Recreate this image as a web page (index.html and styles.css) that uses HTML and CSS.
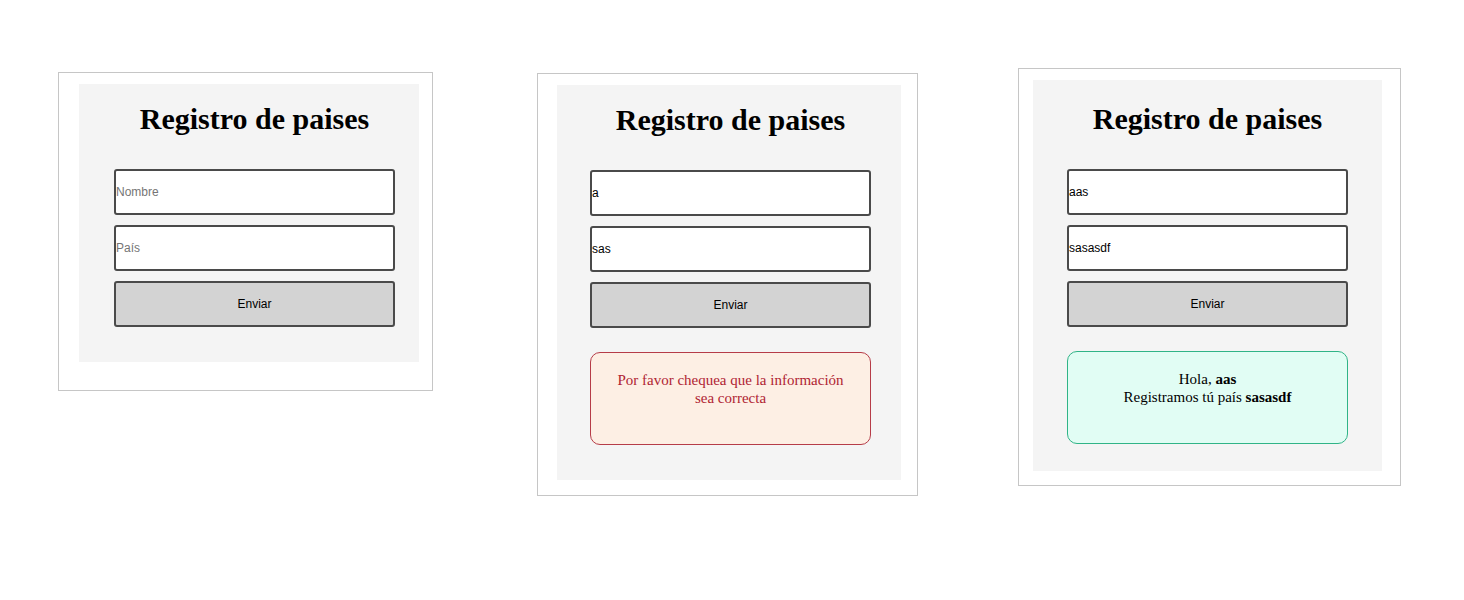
FILE: index.html
```html
<!DOCTYPE html>
<html lang="es">
<head>
<meta charset="utf-8">
<title>Registro de paises</title>
<link rel="stylesheet" href="styles.css">
</head>
<body>
<main class="row">
  <section class="card card-1">
    <div class="panel panel-1">
      <h1 class="title">Registro de paises</h1>
      <form class="form">
        <input class="field" type="text" placeholder="Nombre">
        <input class="field" type="text" placeholder="País">
        <button class="submit" type="button">Enviar</button>
      </form>
    </div>
  </section>

  <section class="card card-2">
    <div class="panel panel-2">
      <h1 class="title">Registro de paises</h1>
      <form class="form">
        <input class="field" type="text" placeholder="Nombre" value="a">
        <input class="field" type="text" placeholder="País" value="sas">
        <button class="submit" type="button">Enviar</button>
      </form>
      <div class="message message-error">Por favor chequea que la información sea correcta</div>
    </div>
  </section>

  <section class="card card-3">
    <div class="panel panel-3">
      <h1 class="title">Registro de paises</h1>
      <form class="form">
        <input class="field" type="text" placeholder="Nombre" value="aas">
        <input class="field" type="text" placeholder="País" value="sasasdf">
        <button class="submit" type="button">Enviar</button>
      </form>
      <div class="message message-success">Hola, <b>aas</b><br>Registramos tú país <b>sasasdf</b></div>
    </div>
  </section>
</main>
</body>
</html>
```

FILE: styles.css
```css
* {
  box-sizing: border-box;
}

html, body {
  margin: 0;
  padding: 0;
  background: #ffffff;
}

body {
  font-family: "Liberation Serif", "Times New Roman", serif;
  color: #000;
}

.row {
  display: flex;
  align-items: flex-start;
  padding-left: 58px;
}

.card {
  border: 1px solid #c6c6c6;
  background: #ffffff;
  display: flex;
}

.card-1 {
  margin-top: 72px;
  padding: 11px 13px 28px 20px;
}

.card-2 {
  margin-top: 73px;
  margin-left: 104px;
  padding: 11px 16px 15px 19px;
}

.card-3 {
  margin-top: 68px;
  margin-left: 100px;
  padding: 11px 18px 14px 14px;
}

.panel {
  background: #f4f4f4;
  display: flex;
  flex-direction: column;
}

.panel-1 {
  width: 340px;
  padding: 16px 24px 35px 35px;
}

.panel-2 {
  width: 344px;
  padding: 16px 30px 35px 33px;
}

.panel-3 {
  width: 349px;
  padding: 20px 34px 27px 34px;
}

.title {
  margin: 0 0 32px;
  font-size: 30px;
  line-height: 37px;
  font-weight: bold;
  text-align: center;
  white-space: nowrap;
}

.form {
  display: flex;
  flex-direction: column;
  gap: 10px;
  margin: 0;
}

.field,
.submit {
  width: 281px;
  height: 46px;
  margin: 0;
  border: 2px solid #4a4a4a;
  border-radius: 3px;
  font-family: "Liberation Sans", Arial, sans-serif;
  font-size: 12px;
  color: #000;
}

.field {
  background: #ffffff;
  padding: 0;
}

.field::placeholder {
  color: #757575;
}

.submit {
  background: #d3d3d3;
  text-align: center;
  padding: 0;
}

.message {
  margin-top: 24px;
  width: 281px;
  height: 93px;
  border: 1px solid;
  border-radius: 10px;
  padding: 19px 20px 0;
  font-size: 15px;
  line-height: 17.5px;
  text-align: center;
}

.message-error {
  background: #fdefe4;
  border-color: #b63c48;
  color: #b02433;
}

.message-success {
  background: #e1fdf4;
  border-color: #30b487;
  color: #000;
}
```
